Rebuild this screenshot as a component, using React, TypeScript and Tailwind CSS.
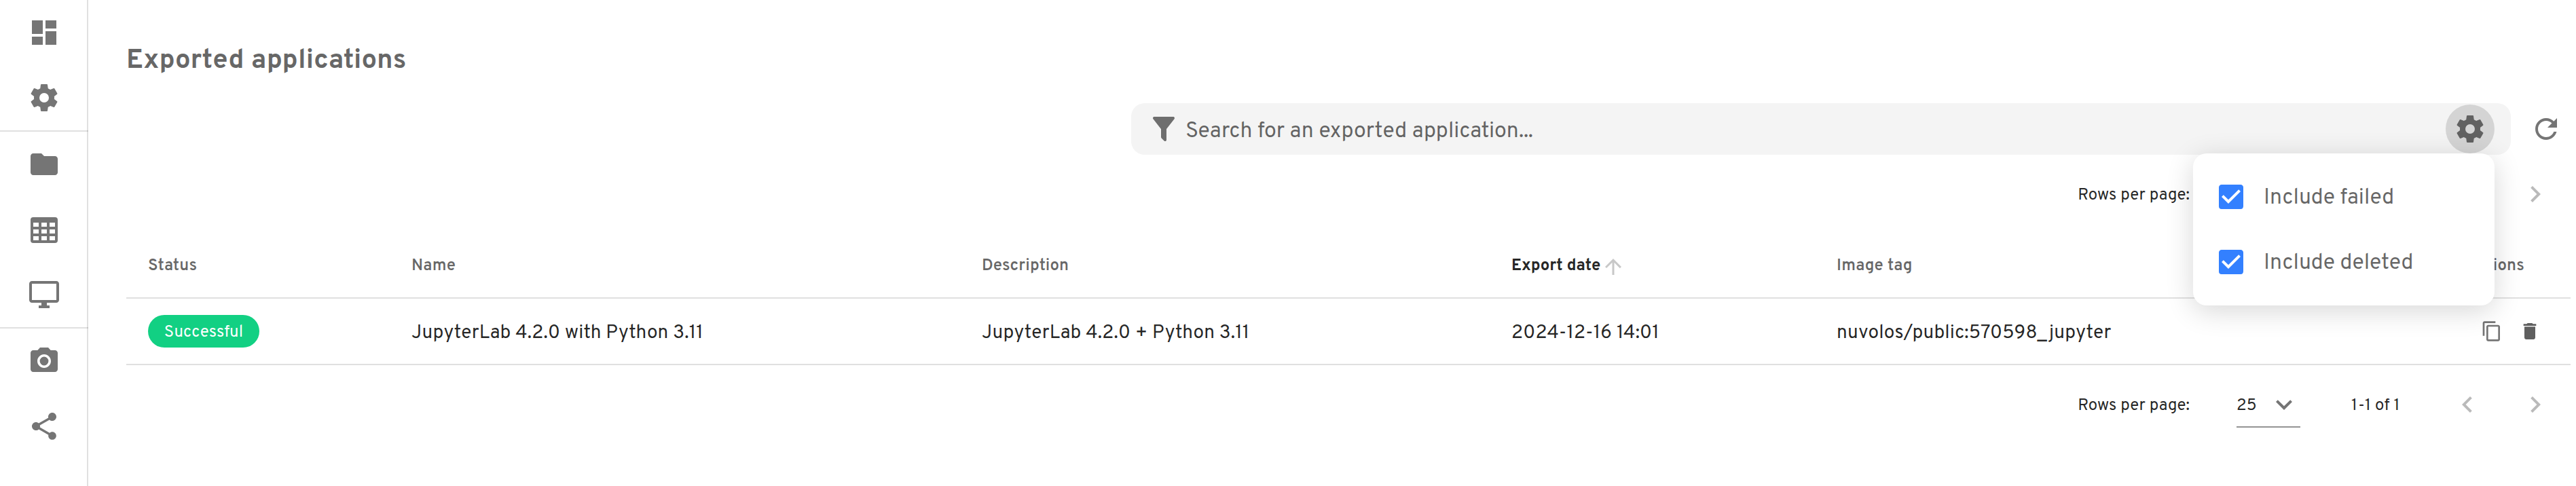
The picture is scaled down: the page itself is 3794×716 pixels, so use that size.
import type { ReactNode } from "react";

const ICONS = {
  dashboard: "M3 13h8V3H3v10zm0 8h8v-6H3v6zm10 0h8V11h-8v10zm0-18v6h8V3h-8z",
  cog: "M12,15.5A3.5,3.5 0 0,1 8.5,12A3.5,3.5 0 0,1 12,8.5A3.5,3.5 0 0,1 15.5,12A3.5,3.5 0 0,1 12,15.5M19.43,12.97C19.47,12.65 19.5,12.33 19.5,12C19.5,11.67 19.47,11.34 19.43,11L21.54,9.37C21.73,9.22 21.78,8.95 21.66,8.73L19.66,5.27C19.54,5.05 19.27,4.96 19.05,5.05L16.56,6.05C16.04,5.66 15.5,5.32 14.87,5.07L14.5,2.42C14.46,2.18 14.25,2 14,2H10C9.75,2 9.54,2.18 9.5,2.42L9.13,5.07C8.5,5.32 7.96,5.66 7.44,6.05L4.95,5.05C4.73,4.96 4.46,5.05 4.34,5.27L2.34,8.73C2.21,8.95 2.27,9.22 2.46,9.37L4.57,11C4.53,11.34 4.5,11.67 4.5,12C4.5,12.33 4.53,12.65 4.57,12.97L2.46,14.63C2.27,14.78 2.21,15.05 2.34,15.27L4.34,18.73C4.46,18.95 4.73,19.03 4.95,18.95L7.44,17.94C7.96,18.34 8.5,18.68 9.13,18.93L9.5,21.58C9.54,21.82 9.75,22 10,22H14C14.25,22 14.46,21.82 14.5,21.58L14.87,18.93C15.5,18.67 16.04,18.34 16.56,17.94L19.05,18.95C19.27,19.03 19.54,18.95 19.66,18.73L21.66,15.27C21.78,15.05 21.73,14.78 21.54,14.63L19.43,12.97Z",
  folder: "M10 4H4c-1.1 0-1.99.9-1.99 2L2 18c0 1.1.9 2 2 2h16c1.1 0 2-.9 2-2V8c0-1.1-.9-2-2-2h-8l-2-2z",
  table: "M4,3H20A2,2 0 0,1 22,5V20A2,2 0 0,1 20,22H4A2,2 0 0,1 2,20V5A2,2 0 0,1 4,3M4,7V10H8V7H4M10,7V10H14V7H10M20,10V7H16V10H20M4,12V15H8V12H4M4,20H8V17H4V20M10,12V15H14V12H10M10,20H14V17H10V20M20,20V17H16V20H20M20,12H16V15H20V12Z",
  desktop: "M21 2H3c-1.1 0-2 .9-2 2v12c0 1.1.9 2 2 2h7v2H8v2h8v-2h-2v-2h7c1.1 0 2-.9 2-2V4c0-1.1-.9-2-2-2zm0 14H3V4h18v12z",
  camera: "M12 8.8a3.2 3.2 0 1 0 0 6.4a3.2 3.2 0 1 0 0-6.4zM9 2L7.17 4H4c-1.1 0-2 .9-2 2v12c0 1.1.9 2 2 2h16c1.1 0 2-.9 2-2V6c0-1.1-.9-2-2-2h-3.17L15 2H9zm3 15c-2.76 0-5-2.24-5-5s2.24-5 5-5 5 2.24 5 5-2.24 5-5 5z",
  share: "M18 16.08c-.76 0-1.44.3-1.96.77L8.91 12.7c.05-.23.09-.46.09-.7s-.04-.47-.09-.7l7.05-4.11c.54.5 1.25.81 2.04.81 1.66 0 3-1.34 3-3s-1.34-3-3-3-3 1.34-3 3c0 .24.04.47.09.7L8.04 9.81C7.5 9.31 6.79 9 6 9c-1.66 0-3 1.34-3 3s1.34 3 3 3c.79 0 1.5-.31 2.04-.81l7.12 4.16c-.05.21-.08.43-.08.65 0 1.61 1.31 2.92 2.92 2.92 1.61 0 2.92-1.31 2.92-2.92s-1.31-2.92-2.92-2.92z",
  filter: "M14,12V19.88C14.04,20.18 13.94,20.5 13.71,20.71C13.32,21.1 12.69,21.1 12.3,20.71L10.29,18.7C10.06,18.47 9.96,18.16 10,17.87V12H9.97L4.21,4.62C3.87,4.19 3.95,3.56 4.38,3.22C4.57,3.08 4.78,3 5,3V3H19V3C19.22,3 19.43,3.08 19.62,3.22C20.05,3.56 20.13,4.19 19.79,4.62L14.03,12H14Z",
  refresh: "M17.65 6.35C16.2 4.9 14.21 4 12 4c-4.42 0-7.99 3.58-7.99 8s3.57 8 7.99 8c3.73 0 6.84-2.55 7.73-6h-2.08c-.82 2.33-3.04 4-5.65 4-3.31 0-6-2.69-6-6s2.69-6 6-6c1.66 0 3.14.69 4.22 1.78L13 11h7V4l-2.35 2.35z",
  checkbox: "M10,17L5,12L6.41,10.58L10,14.17L17.59,6.58L19,8M19,3H5C3.89,3 3,3.89 3,5V19A2,2 0 0,0 5,21H19A2,2 0 0,0 21,19V5C21,3.89 20.1,3 19,3Z",
  chevronDown: "M7.41,8.58L12,13.17L16.59,8.58L18,10L12,16L6,10L7.41,8.58Z",
  chevronLeft: "M15.41,16.58L10.83,12L15.41,7.41L14,6L8,12L14,18L15.41,16.58Z",
  chevronRight: "M8.59,16.58L13.17,12L8.59,7.41L10,6L16,12L10,18L8.59,16.58Z",
  arrowUp: "M4 12l1.41 1.41L11 7.83V20h2V7.83l5.58 5.59L20 12l-8-8-8 8z",
  copy: "M16 1H4c-1.1 0-2 .9-2 2v14h2V3h12V1zm3 4H8c-1.1 0-2 .9-2 2v14c0 1.1.9 2 2 2h11c1.1 0 2-.9 2-2V7c0-1.1-.9-2-2-2zm0 16H8V7h11v14z",
  trash: "M6 19c0 1.1.9 2 2 2h8c1.1 0 2-.9 2-2V7H6v12zM19 4h-3.5l-1-1h-5l-1 1H5v2h14V4z",
};

type IconName = keyof typeof ICONS;

function Icon({ name, className = "size-12" }: { name: IconName; className?: string }) {
  return (
    <svg viewBox="0 0 24 24" fill="currentColor" className={`shrink-0 ${className}`} aria-hidden="true">
      <path d={ICONS[name]} />
    </svg>
  );
}

function NavItem({ name }: { name: IconName }) {
  return (
    <button className="flex h-24 w-[130px] items-center justify-center text-[#757575]">
      <Icon name={name} />
    </button>
  );
}

function Sidebar() {
  return (
    <nav className="w-[130px] shrink-0 border-r-2 border-black/12">
      <NavItem name="dashboard" />
      <NavItem name="cog" />
      <div className="h-0.5 w-[130px] bg-black/12" />
      <NavItem name="folder" />
      <NavItem name="table" />
      <NavItem name="desktop" />
      <div className="h-0.5 w-[130px] bg-black/12" />
      <NavItem name="camera" />
      <NavItem name="share" />
    </nav>
  );
}

function MenuItem({ label }: { label: string }) {
  return (
    <div className="flex h-24 items-center gap-6 pl-8">
      <Icon name="checkbox" className="size-12 text-[#3380ff]" />
      <span className="pt-1 text-[32px] leading-10 text-black/60">{label}</span>
    </div>
  );
}

function SearchBar() {
  return (
    <div className="flex h-[76px] w-[2032px] items-center rounded-[20px] bg-[#f4f4f4] px-6">
      <Icon name="filter" className="size-12 text-[#6e6e6e]" />
      <span className="ml-2 flex-1 pt-2 text-[32px] leading-10 text-black/60">Search for an exported application...</span>
      <div className="relative">
        <button className="flex size-[72px] items-center justify-center rounded-full bg-[#d4d4d4] text-[#616161]">
          <Icon name="cog" />
        </button>
        <div className="absolute top-[72px] right-0 z-10 w-[444px] rounded-[20px] bg-white py-4 shadow-[0_8px_40px_rgba(0,0,0,0.16)]">
          <MenuItem label="Include failed" />
          <MenuItem label="Include deleted" />
        </div>
      </div>
    </div>
  );
}

function Pagination() {
  return (
    <div className="flex h-[68px] items-center justify-end pr-9 text-2xl text-black/87">
      <span className="pt-1 tracking-[0.12px]">Rows per page:</span>
      <div className="ml-[69px] flex h-[68px] w-[94px] items-center justify-between border-b-2 border-[#949494] pt-0.5">
        <span className="pt-1">25</span>
        <Icon name="chevronDown" className="size-12 text-[#757575]" />
      </div>
      <span className="ml-[75px] w-[147px] pt-1 tracking-[0.2px]">1-1 of 1</span>
      <Icon name="chevronLeft" className="size-12 text-[#bababa]" />
      <Icon name="chevronRight" className="ml-[52px] size-12 text-[#bababa]" />
    </div>
  );
}

function Row({ children, className }: { children: ReactNode; className: string }) {
  return (
    <div
      className={`grid grid-cols-[388px_840px_780px_479px_1fr] items-center border-b-2 border-[#e0e0e0] px-8 ${className}`}
    >
      {children}
    </div>
  );
}

function HeaderCell({ children }: { children: ReactNode }) {
  return <span className="pt-1.5 text-2xl font-semibold tracking-[0.2px] text-black/60">{children}</span>;
}

function Cell({ children }: { children: ReactNode }) {
  return <span className="pt-1.5 text-[28px] tracking-[0.18px] text-black/87">{children}</span>;
}

export default function App() {
  return (
    <div className="flex h-[716px] w-full overflow-hidden bg-white font-['Overpass','Roboto',sans-serif]">
      <Sidebar />
      <main className="flex-1 pl-14">
        <h1 className="flex h-[152px] items-center pt-7 text-[40px] leading-[48px] font-bold tracking-[0.2px] text-black/60">
          Exported applications
        </h1>
        <div className="flex items-center justify-end gap-7 pr-5">
          <SearchBar />
          <Icon name="refresh" className="size-12 text-[#757575]" />
        </div>
        <div className="pt-6">
          <Pagination />
        </div>
        <div className="mt-5 w-[3600px]">
          <Row className="h-[100px]">
            <HeaderCell>Status</HeaderCell>
            <HeaderCell>Name</HeaderCell>
            <HeaderCell>Description</HeaderCell>
            <span className="flex items-center text-2xl font-bold text-black/87">
              <span className="pt-1.5">Export date</span>
              <Icon name="arrowUp" className="mt-2 ml-px size-9 text-[#c8c8c8]" />
            </span>
            <span className="flex items-center justify-between pr-9">
              <HeaderCell>Image tag</HeaderCell>
              <HeaderCell>Actions</HeaderCell>
            </span>
          </Row>
          <Row className="h-[98px]">
            <span className="flex h-12 w-[164px] items-center justify-center rounded-full bg-[#12d083] pt-1 text-2xl tracking-[0.2px] text-white">
              Successful
            </span>
            <Cell>JupyterLab 4.2.0 with Python 3.11</Cell>
            <Cell>JupyterLab 4.2.0 + Python 3.11</Cell>
            <Cell>2024-12-16 14:01</Cell>
            <span className="flex items-center">
              <Cell>nuvolos/public:570598_jupyter</Cell>
              <Icon name="copy" className="ml-auto size-8 text-[#757575]" />
              <Icon name="trash" className="mr-3 ml-6 size-8 text-[#5f5f5f]" />
            </span>
          </Row>
        </div>
        <div className="pt-6">
          <Pagination />
        </div>
      </main>
    </div>
  );
}
